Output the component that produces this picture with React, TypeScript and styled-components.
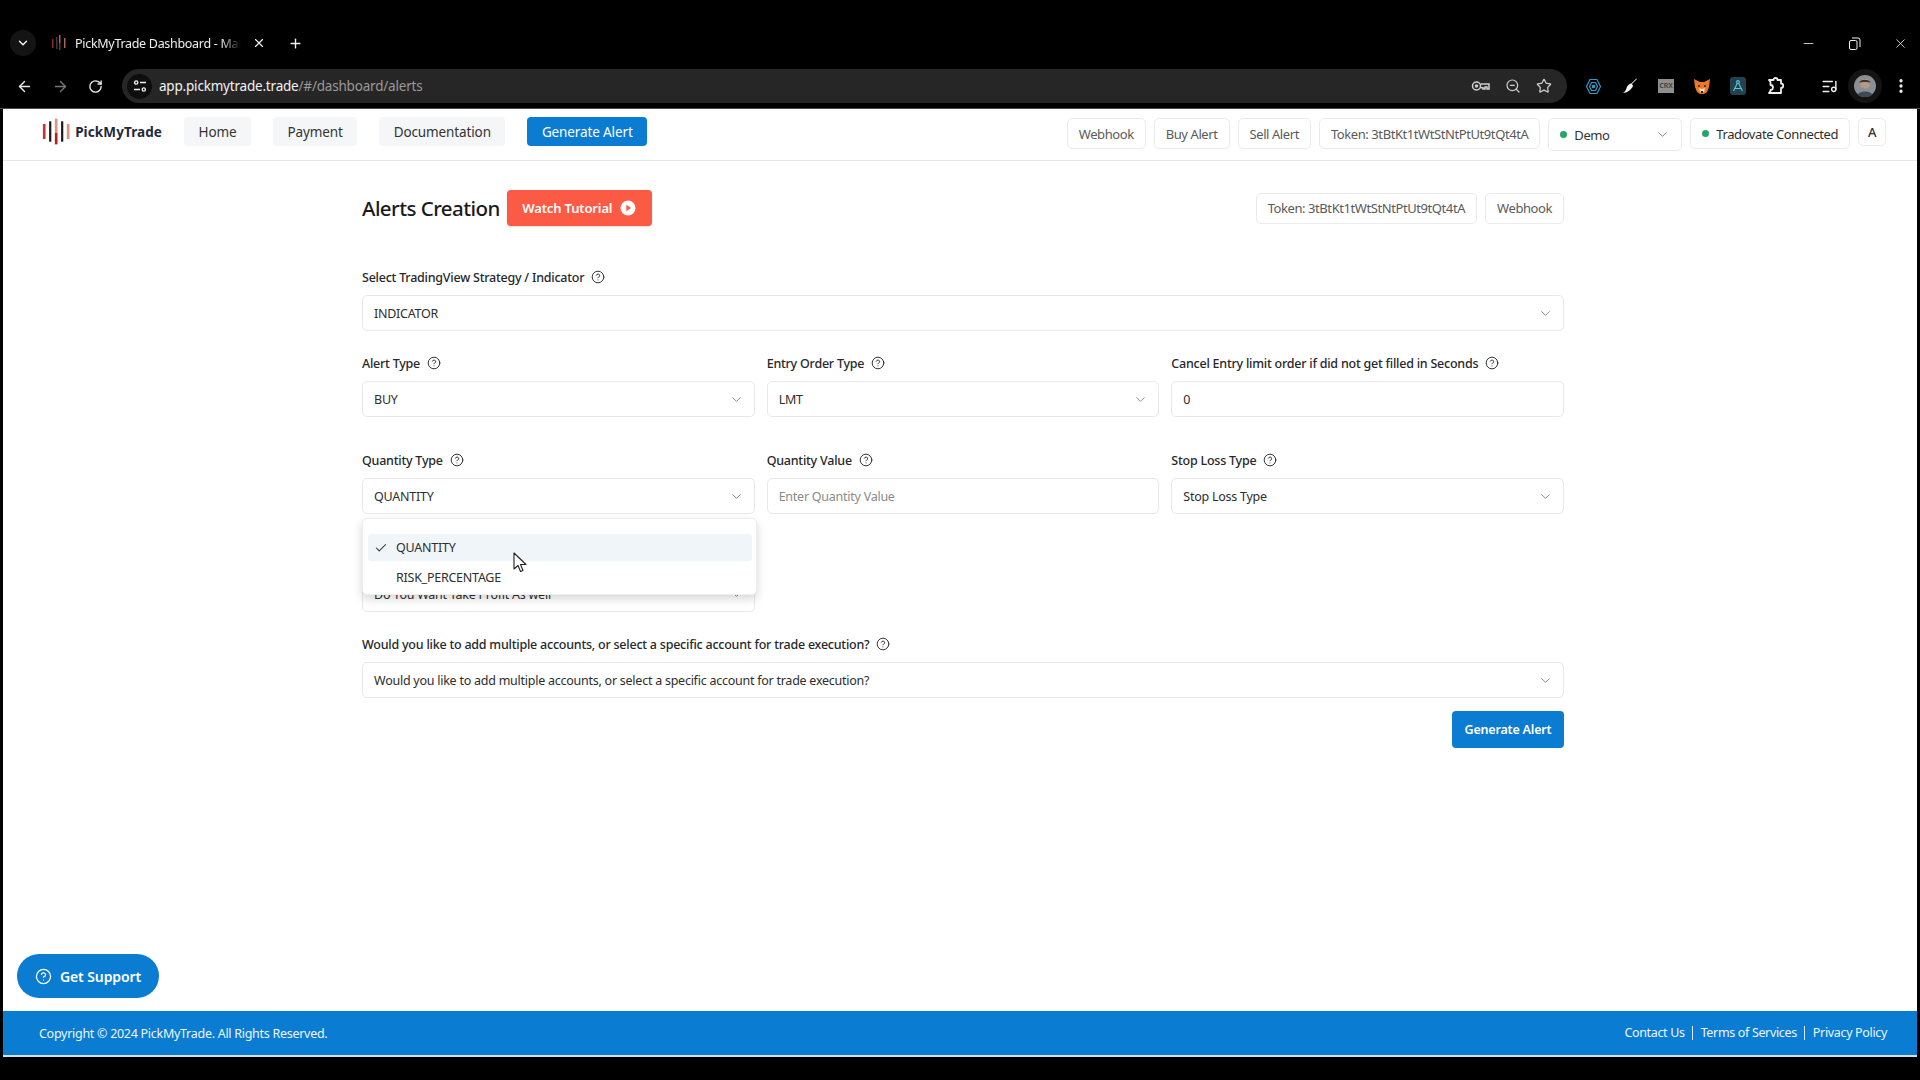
import React from 'react';
import styled, { createGlobalStyle } from 'styled-components';
import {
  ArrowLeft, ArrowRight, Check, ChevronDown, CircleHelp, EllipsisVertical, ListMusic,
  Minus, Plus, RotateCw, Star, X, ZoomOut,
} from 'lucide-react';

const GlobalStyle = createGlobalStyle`
  html, body { margin: 0; padding: 0; background: #000; }
  body { font-family: "Noto Sans", "Open Sans", Arial, sans-serif; }
  * { box-sizing: border-box; }
`;

const Screen = styled.div`
  width: 1920px;
  height: 1080px;
  background: #000;
  display: flex;
  flex-direction: column;
  overflow: hidden;
  position: relative;
`;

/* browser chrome */
const Chrome = styled.header`
  height: 109px;
  flex: none;
  padding-top: 27px;
  border-bottom: 1px solid #4a4a4a;
`;

const TabStrip = styled.div`
  height: 32px;
  display: flex;
  align-items: center;
  padding-left: 10px;
  color: #f1f1f1;
`;

const TabSearch = styled.div`
  width: 26px;
  height: 26px;
  border-radius: 50%;
  background: #141414;
  display: flex;
  align-items: center;
  justify-content: center;
`;

const TabFavicon = styled.svg`
  margin-left: 15px;
  flex: none;
`;

const TabTitle = styled.span`
  margin-left: 8px;
  width: 166px;
  font-size: 12.5px;
  letter-spacing: -0.3px;
  white-space: nowrap;
  overflow: hidden;
  color: #eee;
  -webkit-mask-image: linear-gradient(to right, #000 88%, transparent);
  mask-image: linear-gradient(to right, #000 88%, transparent);
`;

const TabClose = styled.span`
  margin-left: 11px;
  display: flex;
`;

const NewTab = styled.span`
  margin-left: 22px;
  display: flex;
`;

const WindowControls = styled.div`
  margin-left: auto;
  display: flex;
  align-items: center;
  gap: 32px;
  padding-right: 12px;
`;

const RestoreIcon = styled.svg`
  display: block;
`;

const NavRow = styled.div`
  height: 34px;
  margin-top: 10px;
  display: flex;
  align-items: center;
  padding-left: 16px;
  color: #e8e8e8;
`;

const NavIcons = styled.div`
  display: flex;
  align-items: center;
  gap: 19px;
`;

const UrlPill = styled.div`
  margin-left: 19px;
  width: 1445px;
  height: 34px;
  flex: none;
  background: #262626;
  border-radius: 17px;
  display: flex;
  align-items: center;
  padding: 0 15px 0 5px;
`;

const SiteInfo = styled.div`
  width: 25px;
  height: 25px;
  border-radius: 50%;
  background: #0e0e0e;
  display: flex;
  align-items: center;
  justify-content: center;
`;

const UrlHost = styled.span`
  margin-left: 7px;
  font-size: 13.5px;
  letter-spacing: -0.2px;
  color: #f2f2f2;
`;

const UrlPath = styled.span`
  font-size: 13.5px;
  letter-spacing: -0.2px;
  color: #9a9a9a;
`;

const UrlActions = styled.div`
  margin-left: auto;
  display: flex;
  align-items: center;
  gap: 15px;
  color: #cfcfcf;
`;

const Extensions = styled.div`
  margin-left: 18px;
  display: flex;
  align-items: center;
  gap: 20px;
  color: #eee;
`;

const CrxBadge = styled.span`
  width: 16px;
  height: 14px;
  background: #8f8f8f;
  color: #3a3a3a;
  font-size: 7px;
  line-height: 14px;
  text-align: center;
  font-weight: 600;
`;

const ExtTile = styled.span`
  width: 16px;
  height: 18px;
  border-radius: 3px;
  background: #24414f;
  display: flex;
  align-items: center;
  justify-content: center;
`;

const ProfileGroup = styled.div`
  margin-left: 37px;
  display: flex;
  align-items: center;
  gap: 10px;
  color: #eee;
`;

const AvatarRing = styled.div`
  width: 34px;
  height: 34px;
  border-radius: 50%;
  background: #141414;
  display: flex;
  align-items: center;
  justify-content: center;
`;

/* page */
const Page = styled.div`
  flex: 1;
  margin: 0 3px;
  background: #fff;
  display: flex;
  flex-direction: column;
  position: relative;
`;

const TopBar = styled.nav`
  height: 52px;
  flex: none;
  border-bottom: 1px solid #e6e8eb;
  display: flex;
  align-items: flex-start;
  padding: 8px 31px 0 39px;
`;

const Logo = styled.div`
  display: flex;
  align-items: center;
  width: 120px;
  height: 29px;
  gap: 3px;
`;

const LogoText = styled.span`
  font-size: 13.5px;
  font-weight: 700;
  color: #1f2a3a;
  letter-spacing: 0.1px;
`;

const NavLinks = styled.div`
  margin-left: 22px;
  display: flex;
  gap: 22px;
`;

const NavLink = styled.div<{ $primary?: boolean }>`
  height: 29px;
  padding: 0 14.5px;
  border-radius: 4px;
  display: flex;
  align-items: center;
  font-size: 13.5px;
  letter-spacing: -0.12px;
  color: ${({ $primary }) => ($primary ? '#fff' : '#333')};
  background: ${({ $primary }) => ($primary ? '#0a7cd2' : '#f5f6f8')};
`;

const TopRight = styled.div`
  margin-left: auto;
  margin-top: 1px;
  display: flex;
  align-items: flex-start;
  gap: 8px;
`;

const Chip = styled.div<{ $dark?: boolean; $h?: number }>`
  height: ${({ $h }) => $h ?? 31}px;
  padding: 0 11px;
  border: 1px solid #e9ebee;
  border-radius: 5px;
  background: #fff;
  display: flex;
  align-items: center;
  gap: 7px;
  font-size: 13px;
  letter-spacing: -0.42px;
  white-space: nowrap;
  color: ${({ $dark }) => ($dark ? '#2e2e2e' : '#5a5a5a')};
`;

const Dot = styled.span`
  width: 7px;
  height: 7px;
  border-radius: 50%;
  background: #25a56a;
  flex: none;
`;

const DemoSelect = styled(Chip)`
  width: 134px;
  height: 33px;
  color: #333;
`;

const DemoChevron = styled.span`
  margin-left: auto;
  display: flex;
  color: #888;
`;

const AccountChip = styled(Chip)`
  width: 28px;
  padding: 0;
  justify-content: center;
  font-weight: 500;
`;

const Content = styled.main`
  width: 1202px;
  margin-left: 359px;
  padding-top: 29px;
  flex: 1;
`;

const TitleRow = styled.div`
  height: 36px;
  display: flex;
  align-items: center;
`;

const Title = styled.h1`
  margin: 0;
  font-size: 20.5px;
  font-weight: 500;
  color: #1a1a1a;
  letter-spacing: -0.55px;
`;

const TutorialButton = styled.button`
  margin-left: 7px;
  width: 145px;
  height: 36px;
  border: none;
  border-radius: 4px;
  background: #fb5a44;
  color: #fff;
  font: 600 13px "Noto Sans", sans-serif;
  letter-spacing: -0.15px;
  display: flex;
  align-items: center;
  justify-content: center;
  gap: 8px;
  box-shadow: 0 1px 2px rgba(0, 0, 0, 0.15);
`;

const TitleChips = styled.div`
  margin-left: auto;
  display: flex;
  gap: 8px;
`;

const Row = styled.div<{ $top: number; $cols?: number }>`
  margin-top: ${({ $top }) => $top}px;
  display: grid;
  grid-template-columns: repeat(${({ $cols }) => $cols ?? 1}, minmax(0, 1fr));
  column-gap: 12px;
`;

const Field = styled.div`
  min-width: 0;
`;

const Label = styled.label`
  height: 20px;
  margin-bottom: 8px;
  display: flex;
  align-items: center;
  gap: 7px;
  font-size: 12.5px;
  font-weight: 500;
  letter-spacing: -0.23px;
  color: #26282b;
  white-space: nowrap;
`;

const Hint = styled.span`
  display: flex;
  color: #333;
`;

const SelectBox = styled.div<{ $muted?: boolean }>`
  height: 36px;
  border: 1px solid #e6e8eb;
  border-radius: 5px;
  background: #fff;
  padding: 0 10px 0 11px;
  display: flex;
  align-items: center;
  justify-content: space-between;
  font-size: 12.5px;
  letter-spacing: -0.25px;
  color: ${({ $muted }) => ($muted ? '#8a8a8a' : '#2e2e2e')};
  white-space: nowrap;
`;

/* its label is hidden behind the open menu */
const CoveredSelect = styled(SelectBox)`
  margin-top: 28px;
`;

const Chevron = styled.span`
  display: flex;
  color: #8d8d8d;
`;

const SubmitRow = styled.div`
  margin-top: 13px;
  display: flex;
  justify-content: flex-end;
`;

const SubmitButton = styled.button`
  width: 112px;
  height: 37px;
  border: none;
  border-radius: 4px;
  background: #0a7cd2;
  color: #fff;
  font: 600 12.5px "Noto Sans", sans-serif;
  letter-spacing: -0.2px;
`;

/* open menu, sits over the take profit select */
const MenuAnchor = styled.div`
  position: relative;
`;

const Menu = styled.div`
  position: absolute;
  top: 40px;
  left: 0;
  width: 395px;
  height: 77px;
  padding: 15px 4px 0 5px;
  background: #fff;
  border: 1px solid #eceef0;
  border-radius: 5px;
  box-shadow: 0 4px 10px rgba(0, 0, 0, 0.16);
  z-index: 2;
`;

const MenuItem = styled.div<{ $active?: boolean }>`
  height: 27px;
  margin-bottom: 3px;
  padding-left: 6px;
  border-radius: 3px;
  display: flex;
  align-items: center;
  gap: 7px;
  font-size: 12.5px;
  letter-spacing: -0.25px;
  color: #2e2e2e;
  background: ${({ $active }) => ($active ? '#f0f5fa' : 'transparent')};
`;

const CheckSlot = styled.span`
  width: 15px;
  display: flex;
`;

const Cursor = styled.svg`
  position: absolute;
  left: 510px;
  top: 443px;
  z-index: 3;
`;

const SupportButton = styled.button`
  position: absolute;
  left: 14px;
  bottom: 59px;
  width: 142px;
  height: 44px;
  border: none;
  border-radius: 22px;
  background: #0a7cd2;
  color: #fff;
  font: 600 14px "Noto Sans", sans-serif;
  letter-spacing: -0.1px;
  display: flex;
  align-items: center;
  justify-content: center;
  gap: 8px;
`;

const Footer = styled.footer`
  height: 46px;
  flex: none;
  background: #0a7cd2;
  border-bottom: 2px solid #d5deea;
  display: flex;
  align-items: center;
  justify-content: space-between;
  padding: 0 30px 0 36px;
  color: #eef6fd;
  font-size: 12.5px;
  letter-spacing: -0.28px;
`;

const FooterLinks = styled.div`
  display: flex;
  align-items: center;
  letter-spacing: -0.34px;
`;

const FooterLink = styled.span<{ $first?: boolean }>`
  padding: 0 7.5px;
  line-height: 14px;
  border-left: ${({ $first }) => ($first ? 'none' : '1px solid #d7ebfa')};
  &:last-child { padding-right: 0; }
`;

const Spacer = styled.div`
  height: 23px;
  flex: none;
`;

const hint = (
  <Hint>
    <CircleHelp size={14} strokeWidth={1.7} />
  </Hint>
);

const arrow = (
  <Chevron>
    <ChevronDown size={15} strokeWidth={1.6} />
  </Chevron>
);

const LogoMark: React.FC = () => (
  <svg width="34" height="29" viewBox="0 0 34 29">
    <rect x="1" y="6" width="3" height="17" fill="#c9332c" />
    <rect x="8" y="3" width="2.5" height="23" fill="#1b1b1b" />
    <rect x="14.5" y="0" width="3" height="16" fill="#e58f7f" />
    <rect x="14.5" y="16" width="3" height="13" fill="#b3201d" />
    <rect x="21.5" y="3" width="2.5" height="23" fill="#1b1b1b" />
    <rect x="28" y="6" width="3" height="17" fill="#e58f7f" />
  </svg>
);

const App: React.FC = () => (
  <Screen>
    <GlobalStyle />
    <Chrome>
      <TabStrip>
        <TabSearch><ChevronDown size={14} strokeWidth={2.5} /></TabSearch>
        <TabFavicon width="16" height="16" viewBox="0 0 16 16">
          <rect x="1" y="4" width="1.5" height="9" fill="#8c2a26" />
          <rect x="5" y="2" width="1.5" height="12" fill="#3a3a3a" />
          <rect x="8" y="0" width="1.5" height="8" fill="#a5655b" />
          <rect x="8" y="8" width="1.5" height="7" fill="#8c2a26" />
          <rect x="13" y="3" width="1.5" height="10" fill="#a5655b" />
        </TabFavicon>
        <TabTitle>PickMyTrade Dashboard - Manage</TabTitle>
        <TabClose><X size={14} strokeWidth={2} /></TabClose>
        <NewTab><Plus size={15} strokeWidth={2.2} /></NewTab>
        <WindowControls>
          <Minus size={15} strokeWidth={1.3} />
          <RestoreIcon width="13" height="13" viewBox="0 0 13 13" fill="none" stroke="#f1f1f1" strokeWidth="1">
            <rect x="1.5" y="3.5" width="7.5" height="9" rx="1.5" />
            <path d="M4 1h6a2 2 0 0 1 2 2v7" />
          </RestoreIcon>
          <X size={15} strokeWidth={1.3} />
        </WindowControls>
      </TabStrip>
      <NavRow>
        <NavIcons>
          <ArrowLeft size={17} strokeWidth={2} />
          <ArrowRight size={17} strokeWidth={2} color="#777" />
          <RotateCw size={15} strokeWidth={2.2} />
        </NavIcons>
        <UrlPill>
          <SiteInfo>
            <svg width="14" height="14" viewBox="0 0 14 14" fill="none" stroke="#eee" strokeWidth="1.4">
              <circle cx="3.2" cy="3.5" r="1.6" />
              <path d="M7 3.5h6M1 10.5h6" />
              <circle cx="10.8" cy="10.5" r="1.6" />
            </svg>
          </SiteInfo>
          <UrlHost>app.pickmytrade.trade</UrlHost>
          <UrlPath>/#/dashboard/alerts</UrlPath>
          <UrlActions>
            <svg width="19" height="12" viewBox="0 0 19 12" fill="none" stroke="#cfcfcf" strokeWidth="1.5">
              <circle cx="5.5" cy="6" r="4" />
              <circle cx="5.5" cy="6" r="1" />
              <path d="M9.5 4h8.5v5h-2V7h-2v2h-2V7.8H9.5" />
            </svg>
            <ZoomOut size={16} strokeWidth={1.8} />
            <Star size={16} strokeWidth={1.8} />
          </UrlActions>
        </UrlPill>
        <Extensions>
          <svg width="17" height="17" viewBox="0 0 17 17" fill="none" stroke="#2e9cc9" strokeWidth="1.2">
            <path d="M5 1.5h7l3.5 7-3.5 7H5l-3.5-7z" />
            <path d="M6.5 4.5h4l2 4-2 4h-4l-2-4z" />
            <circle cx="8.5" cy="8.5" r="1.2" fill="#2e9cc9" />
          </svg>
          <svg width="16" height="16" viewBox="0 0 16 16">
            <path d="M15 1 9.5 6.5l-.8-.5L14.4.4z" fill="#ddd" />
            <path d="M8.5 5.5c1.5.5 2.5 1.5 2.5 2.8C9 12 5 15 1 15c2-1.5 3-2.8 3.5-5 .5-2 2.500-3.800 4-4.500z" fill="#f4f4f4" />
          </svg>
          <CrxBadge>CRX</CrxBadge>
          <svg width="16" height="16" viewBox="0 0 16 16">
            <path d="M0 1l6 3h4l6-3-1 8-2 5-3 2H6l-3-2-2-5z" fill="#e8792b" />
            <path d="M5 10l3 1 3-1-1 4H6z" fill="#f3d9bd" />
            <path d="M7 13h2v2H7z" fill="#2c1b10" />
            <circle cx="5" cy="8" r="0.9" fill="#2c1b10" />
            <circle cx="11" cy="8" r="0.9" fill="#2c1b10" />
          </svg>
          <ExtTile>
            <svg width="12" height="14" viewBox="0 0 12 14" fill="none" stroke="#5cc4dd" strokeWidth="1.1">
              <circle cx="6" cy="3" r="1.4" />
              <path d="M5.3 4.3 1.5 12M6.7 4.3 10.5 12M2.500 9.500h7" />
            </svg>
          </ExtTile>
          <svg width="18" height="18" viewBox="0 0 18 18" fill="none" stroke="#eee" strokeWidth="1.8" strokeLinejoin="round">
            <path d="M3 3h4.5a2 2 0 0 1 4 0H15v3.500a2.200 2.200 0 0 1 0 4.500V16H3l1.500-2v-1a2.500 2.500 0 0 0 0-5V5z" />
          </svg>
        </Extensions>
        <ProfileGroup>
          <ListMusic size={17} strokeWidth={2} />
          <AvatarRing>
            <svg width="22" height="22" viewBox="0 0 20 20">
              <circle cx="10" cy="10" r="10" fill="#8a8f94" />
              <circle cx="10" cy="8" r="4.5" fill="#b89a84" />
              <path d="M5 7c.5-3.500 9-3.500 10 0-2-1-8-1-10 0z" fill="#3c342e" />
              <path d="M3.500 18c1-4 12-4 13 0a10 10 0 0 1-13 0z" fill="#3f4a59" />
            </svg>
          </AvatarRing>
          <EllipsisVertical size={18} strokeWidth={2.4} />
        </ProfileGroup>
      </NavRow>
    </Chrome>

    <Page>
      <TopBar>
        <Logo>
          <LogoMark />
          <LogoText>PickMyTrade</LogoText>
        </Logo>
        <NavLinks>
          <NavLink>Home</NavLink>
          <NavLink>Payment</NavLink>
          <NavLink>Documentation</NavLink>
          <NavLink $primary>Generate Alert</NavLink>
        </NavLinks>
        <TopRight>
          <Chip>Webhook</Chip>
          <Chip>Buy Alert</Chip>
          <Chip>Sell Alert</Chip>
          <Chip>Token: 3tBtKt1tWtStNtPtUt9tQt4tA</Chip>
          <DemoSelect $dark>
            <Dot />
            Demo
            <DemoChevron><ChevronDown size={15} strokeWidth={1.6} /></DemoChevron>
          </DemoSelect>
          <Chip $dark><Dot />Tradovate Connected</Chip>
          <AccountChip $dark $h={28}>A</AccountChip>
        </TopRight>
      </TopBar>

      <Content>
        <TitleRow>
          <Title>Alerts Creation</Title>
          <TutorialButton>
            Watch Tutorial
            <svg width="16" height="16" viewBox="0 0 16 16">
              <circle cx="8" cy="8" r="7.5" fill="#fff" />
              <path d="M6.3 4.8 11 8l-4.7 3.2z" fill="#fb5a44" />
            </svg>
          </TutorialButton>
          <TitleChips>
            <Chip>Token: 3tBtKt1tWtStNtPtUt9tQt4tA</Chip>
            <Chip>Webhook</Chip>
          </TitleChips>
        </TitleRow>

        <Row $top={41}>
          <Field>
            <Label>Select TradingView Strategy / Indicator {hint}</Label>
            <SelectBox>INDICATOR {arrow}</SelectBox>
          </Field>
        </Row>

        <Row $top={22} $cols={3}>
          <Field>
            <Label>Alert Type {hint}</Label>
            <SelectBox>BUY {arrow}</SelectBox>
          </Field>
          <Field>
            <Label>Entry Order Type {hint}</Label>
            <SelectBox>LMT {arrow}</SelectBox>
          </Field>
          <Field>
            <Label>Cancel Entry limit order if did not get filled in Seconds {hint}</Label>
            <SelectBox>0</SelectBox>
          </Field>
        </Row>

        <Row $top={33} $cols={3}>
          <Field>
            <Label>Quantity Type {hint}</Label>
            <MenuAnchor>
              <SelectBox>QUANTITY {arrow}</SelectBox>
              <Menu>
                <MenuItem $active>
                  <CheckSlot><Check size={14} strokeWidth={1.8} /></CheckSlot>
                  QUANTITY
                </MenuItem>
                <MenuItem>
                  <CheckSlot />
                  RISK_PERCENTAGE
                </MenuItem>
              </Menu>
            </MenuAnchor>
          </Field>
          <Field>
            <Label>Quantity Value {hint}</Label>
            <SelectBox $muted>Enter Quantity Value</SelectBox>
          </Field>
          <Field>
            <Label>Stop Loss Type {hint}</Label>
            <SelectBox>Stop Loss Type {arrow}</SelectBox>
          </Field>
        </Row>

        <Row $top={34} $cols={3}>
          <Field>
            <CoveredSelect>Do You Want Take Profit As well {arrow}</CoveredSelect>
          </Field>
        </Row>

        <Row $top={22}>
          <Field>
            <Label>Would you like to add multiple accounts, or select a specific account for trade execution? {hint}</Label>
            <SelectBox>Would you like to add multiple accounts, or select a specific account for trade execution? {arrow}</SelectBox>
          </Field>
        </Row>

        <SubmitRow>
          <SubmitButton>Generate Alert</SubmitButton>
        </SubmitRow>
      </Content>

      <Cursor width="14" height="21" viewBox="0 0 14 21">
        <path d="M1 1v16l4-3.5 2.5 6 2.5-1-2.5-6H13z" fill="#fff" stroke="#222" strokeWidth="1.1" strokeLinejoin="round" />
      </Cursor>

      <SupportButton>
        <CircleHelp size={17} strokeWidth={1.8} />
        Get Support
      </SupportButton>

      <Footer>
        <span>Copyright © 2024 PickMyTrade. All Rights Reserved.</span>
        <FooterLinks>
          <FooterLink $first>Contact Us</FooterLink>
          <FooterLink>Terms of Services</FooterLink>
          <FooterLink>Privacy Policy</FooterLink>
        </FooterLinks>
      </Footer>
    </Page>
    <Spacer />
  </Screen>
);

export default App;
